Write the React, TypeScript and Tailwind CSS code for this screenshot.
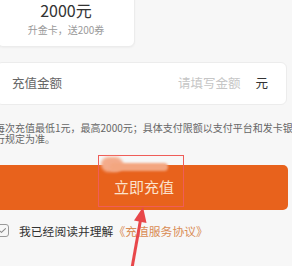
export default function App() {
  return (
    <div className="relative w-[292px] h-[266px] overflow-hidden bg-[#f7f7f7] font-['Noto_Sans_CJK_SC','Noto_Sans',sans-serif]">
      {/* Package card */}
      <div className="-mt-[20px] -ml-[3px] w-[138px] h-[67px] bg-white rounded-md border border-[#ececec] shadow-[0_1px_2px_rgba(0,0,0,0.04)] flex flex-col items-center justify-end pb-[9px]">
        <div className="text-[16px] leading-[20px] text-[#333]">2000元</div>
        <div className="mt-[3px] text-[10px] leading-[14px] text-[#9a9a9a]">升金卡，送200券</div>
      </div>

      {/* Amount input */}
      <div className="mt-[15px] -ml-[4px] w-[291px] h-[43px] bg-white rounded-md border border-[#ececec] flex items-center pl-[15px] pr-[18px] text-[12.5px]">
        <span className="text-[#666]">充值金额</span>
        <span className="ml-auto text-[#c6c6c6]">请填写金额</span>
        <span className="ml-[15px] text-[#333]">元</span>
      </div>

      {/* Note */}
      <p className="mt-[17px] -ml-[5px] w-[300px] text-[10px] leading-[11px] text-[#666]">
        每次充值最低1元，最高2000元；具体支付限额以支付平台和发卡银行规定为准。
      </p>

      {/* Submit */}
      <div className="mt-[21px] -ml-[4px] w-[292px] h-[45px] rounded-[5px] bg-[#e8621c] flex items-center justify-center">
        <span className="pl-[4px] text-[15px] text-[#fbe2cd]">立即充值</span>
      </div>

      {/* Agreement */}
      <div className="mt-[12px] -ml-[4px] flex items-center text-[11.8px]">
        <span className="w-[13px] h-[13px] rounded-[3px] border border-[#9a9a9a] flex items-center justify-center">
          <svg viewBox="0 0 12 12" className="w-[9px] h-[9px]" fill="none" stroke="#8a8a8a" strokeWidth={1.4} strokeLinecap="round" strokeLinejoin="round">
            <path d="M2 6.2l2.6 2.4L10 3.4" />
          </svg>
        </span>
        <span className="ml-[10px] text-[#333]">我已经阅读并理解</span>
        <span className="text-[#d98c55]">《充值服务协议》</span>
      </div>

      {/* Annotation overlay */}
      <div className="absolute left-[98px] top-[155px] w-[86px] h-[52px] border border-[#ef5d58]" />
      <div className="absolute left-[101px] top-[157px] w-[22px] h-[15px] rounded-full bg-[#f4ab8a] blur-[1.5px]" />
      <div className="absolute left-[110px] top-[163px] w-[58px] h-[8px] rounded-full bg-[#f3a680] blur-[1px]" />
      <svg className="absolute left-0 top-0 w-[292px] h-[266px] pointer-events-none" viewBox="0 0 292 266">
        <line x1="132" y1="268" x2="140.5" y2="220" stroke="#e8474a" strokeWidth="3" />
        <polygon points="143,207 146.5,223 134,220.6" fill="#e8474a" />
      </svg>
    </div>
  );
}
